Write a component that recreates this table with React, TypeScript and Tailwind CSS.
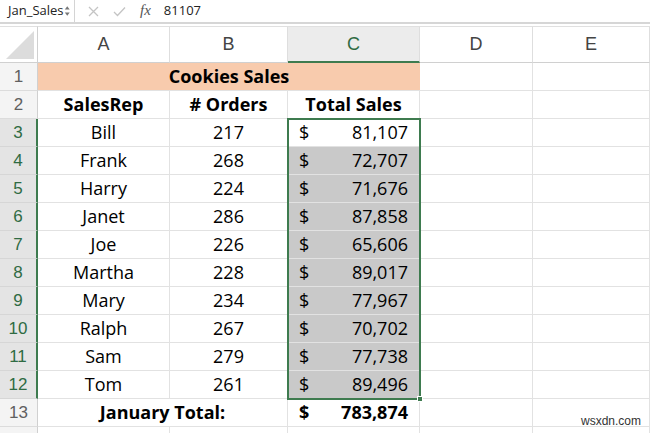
const cols = ["A", "B", "C", "D", "E"];

const rows = [
  { rep: "Bill", orders: 217, total: "81,107" },
  { rep: "Frank", orders: 268, total: "72,707" },
  { rep: "Harry", orders: 224, total: "71,676" },
  { rep: "Janet", orders: 286, total: "87,858" },
  { rep: "Joe", orders: 226, total: "65,606" },
  { rep: "Martha", orders: 228, total: "89,017" },
  { rep: "Mary", orders: 234, total: "77,967" },
  { rep: "Ralph", orders: 267, total: "70,702" },
  { rep: "Sam", orders: 279, total: "77,738" },
  { rep: "Tom", orders: 261, total: "89,496" },
];

const cell = "border-r border-b border-[#e2e2e2] flex items-center";

const RowHead = ({ n, active }: { n?: number; active?: boolean }) => (
  <div
    className={
      "flex items-center justify-center border-b text-[17px] " +
      (active
        ? "bg-[#e4e4e4] border-[#d6d6d6] text-[#2f6b43] border-r-2 border-r-[#3e7b4f]"
        : "bg-[#f4f4f4] border-[#dcdcdc] text-[#606060] border-r border-r-[#d0d0d0]")
    }
    style={{ fontFamily: "'Liberation Sans', Arial, sans-serif" }}
  >
    {n}
  </div>
);

export default function App() {
  return (
    <div className="w-[650px] h-[433px] overflow-hidden bg-white text-black" style={{ fontFamily: "'Open Sans', 'Noto Sans', sans-serif" }}>
      {/* formula bar */}
      <div className="h-[24px] flex items-center border-b-2 border-[#d6d6d6] text-[13px] text-[#222]">
        <div className="w-[75px] h-full flex items-center justify-between pl-[8px] pr-[4px] border-r border-[#d4d4d4]">
          <span>Jan_Sales</span>
          <svg width="8" height="14" viewBox="0 0 8 14" className="text-[#777]">
            <path d="M4 1 L7 5 H1 Z" fill="currentColor" />
            <path d="M4 13 L7 9 H1 Z" fill="currentColor" />
          </svg>
        </div>
        <div className="flex items-center gap-[14px] pl-[13px] text-[#c4c4c4]">
          <svg width="11" height="11" viewBox="0 0 11 11">
            <path d="M1 1 L10 10 M10 1 L1 10" stroke="currentColor" strokeWidth="1.3" />
          </svg>
          <svg width="13" height="11" viewBox="0 0 13 11">
            <path d="M1 6 L4.5 9.5 L12 1.5" stroke="currentColor" strokeWidth="1.3" fill="none" />
          </svg>
          <span className="italic text-[#555] text-[15px] -mt-[2px]" style={{ fontFamily: "'Liberation Serif', serif" }}>
            fx
          </span>
        </div>
        <span className="pl-[13px] text-[13px] text-[#222]">81107</span>
      </div>

      {/* sheet */}
      <div className="relative mt-[2px] grid grid-cols-[38px_132px_118px_132px_113px_117px] grid-rows-[37px_repeat(14,28px)]">
        {/* column headers */}
        <div className="relative bg-white border-r border-b border-[#d0d0d0] border-t border-t-[#e0e0e0]">
          <svg className="absolute right-[3px] bottom-[3px]" width="28" height="28" viewBox="0 0 28 28">
            <path d="M28 0 L28 28 L0 28 Z" fill="#dcdcdc" />
          </svg>
        </div>
        {cols.map((c) => (
          <div
            key={c}
            className={
              "flex items-center justify-center text-[18px] border-t border-t-[#e0e0e0] border-r border-r-[#dedede] " +
              (c === "C"
                ? "bg-[#ececec] text-[#2f6b43] border-b-2 border-b-[#3e7b4f]"
                : "bg-white text-[#444] border-b border-b-[#d0d0d0]")
            }
            style={{ fontFamily: "'Liberation Sans', Arial, sans-serif" }}
          >
            {c}
          </div>
        ))}

        {/* row 1 */}
        <RowHead n={1} />
        <div className="col-span-3 bg-[#f8cbad] border-b border-[#e2e2e2] flex items-center justify-center font-bold text-[18px]">
          Cookies Sales
        </div>
        <div className={cell} />
        <div className={cell} />

        {/* row 2 */}
        <RowHead n={2} />
        <div className={cell + " justify-center font-bold text-[18px]"}>SalesRep</div>
        <div className={cell + " justify-center font-bold text-[18px]"}># Orders</div>
        <div className={cell + " justify-center font-bold text-[18px]"}>Total Sales</div>
        <div className={cell} />
        <div className={cell} />

        {rows.map((r, i) => (
          <div key={r.rep} className="contents">
            <RowHead n={i + 3} active />
            <div className={cell + " justify-center text-[18px]"}>{r.rep}</div>
            <div className={cell + " justify-center text-[18px]"}>{r.orders}</div>
            <div className={cell + " justify-between px-[11px] text-[18px] " + (i === 0 ? "bg-white" : "bg-[#c9c9c9]")}>
              <span>$</span>
              <span>{r.total}</span>
            </div>
            <div className={cell} />
            <div className={cell} />
          </div>
        ))}

        {/* row 13 */}
        <RowHead n={13} />
        <div className="col-span-2 border-r border-b border-[#e2e2e2] flex items-center justify-center font-bold text-[18px]">
          January Total:
        </div>
        <div className={cell + " justify-between px-[11px] font-bold text-[18px]"}>
          <span>$</span>
          <span>783,874</span>
        </div>
        <div className={cell} />
        <div className={cell + " relative"}>
          <span className="absolute right-[8px] top-[13px] text-[12px] text-[#333]" style={{ fontFamily: "'Liberation Sans', Arial, sans-serif" }}>
            wsxdn.com
          </span>
        </div>

        {/* row 14, cut off by the window */}
        <RowHead />
        <div className={cell} />
        <div className={cell} />
        <div className={cell} />
        <div className={cell} />
        <div className={cell} />

        {/* selection */}
        <div className="pointer-events-none absolute left-[287px] top-[92px] w-[134px] h-[282px] border-2 border-[#3e7b4f]">
          <div className="absolute -right-[4px] -bottom-[4px] w-[6px] h-[6px] bg-[#3e7b4f] border border-white" />
        </div>
      </div>
    </div>
  );
}
